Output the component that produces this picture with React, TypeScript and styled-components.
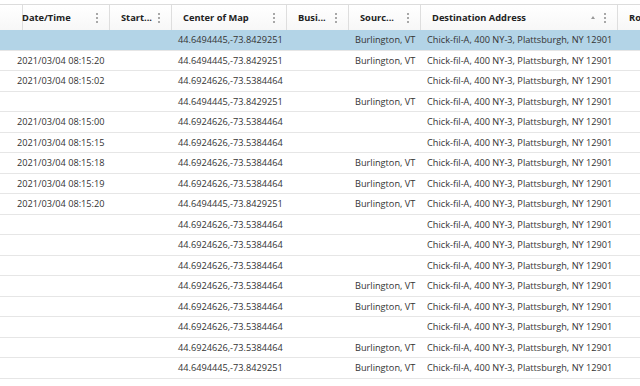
import React from "react";
import styled, { createGlobalStyle } from "styled-components";

const GlobalStyle = createGlobalStyle`
  html, body {
    margin: 0;
    padding: 0;
    background: #ffffff;
    overflow: hidden;
  }
  body {
    font-family: "Open Sans", "Noto Sans", sans-serif;
  }
`;

const COLS = "11px 99px 62px 115px 62px 72px 197px 140px";

const Grid = styled.div`
  padding-top: 4px;
  width: 640px;
  overflow: hidden;
`;

const HeaderRow = styled.div`
  display: grid;
  grid-template-columns: ${COLS};
  height: 26px;
  border-top: 1px solid #dcdcdc;
  box-sizing: border-box;
  background: linear-gradient(#ffffff, #f7f7f7);
`;

const HeaderCell = styled.div`
  display: flex;
  align-items: center;
  gap: 6px;
  padding: 0 11px 0 11px;
  border-right: 1px solid #dedede;
  font-size: 9.3px;
  font-weight: 700;
  color: #222;
  white-space: nowrap;
  overflow: hidden;
  min-width: 0;
`;

const HeaderLabel = styled.span`
  flex: 1;
  overflow: hidden;
`;

const SortArrow = styled.span`
  width: 0;
  height: 0;
  border-left: 2.5px solid transparent;
  border-right: 2.5px solid transparent;
  border-bottom: 3px solid #999;
  margin-right: 3px;
`;

const Dots = styled.span`
  display: flex;
  flex-direction: column;
  gap: 2px;
  flex: none;
  & > i {
    display: block;
    width: 2px;
    height: 2px;
    background: #a8a8a8;
  }
`;

const Row = styled.div<{ $selected?: boolean }>`
  display: grid;
  grid-template-columns: ${COLS};
  height: 20.5px;
  box-sizing: border-box;
  border-bottom: 1px solid #e6e6e6;
  background: ${(p) => (p.$selected ? "#b3d4e7" : "#ffffff")};
`;

const Cell = styled.div`
  display: flex;
  align-items: center;
  padding: 0 6px;
  font-size: 9.2px;
  color: #333;
  white-space: nowrap;
  overflow: hidden;
  min-width: 0;
`;

const DEST = "Chick-fil-A, 400 NY-3, Plattsburgh, NY 12901";
const A = "44.6494445,-73.8429251";
const B = "44.6924626,-73.5384464";
const BUR = "Burlington, VT";

const rows: [string, string, string][] = [
  ["", A, BUR],
  ["2021/03/04 08:15:20", A, BUR],
  ["2021/03/04 08:15:02", B, ""],
  ["", A, BUR],
  ["2021/03/04 08:15:00", B, ""],
  ["2021/03/04 08:15:15", B, ""],
  ["2021/03/04 08:15:18", B, BUR],
  ["2021/03/04 08:15:19", B, BUR],
  ["2021/03/04 08:15:20", A, BUR],
  ["", B, ""],
  ["", B, ""],
  ["", B, ""],
  ["", B, BUR],
  ["", B, BUR],
  ["", B, ""],
  ["", B, BUR],
  ["", A, BUR],
];

const MenuDots = () => (
  <Dots>
    <i />
    <i />
    <i />
  </Dots>
);

const headers = [
  { label: "Date/Time" },
  { label: "Start..." },
  { label: "Center of Map" },
  { label: "Busi..." },
  { label: "Sourc..." },
  { label: "Destination Address", sorted: true },
];

export default function App() {
  return (
    <>
      <GlobalStyle />
      <Grid>
        <HeaderRow>
          <HeaderCell />
          {headers.map((h) => (
            <HeaderCell key={h.label}>
              <HeaderLabel>{h.label}</HeaderLabel>
              {h.sorted && <SortArrow />}
              <MenuDots />
            </HeaderCell>
          ))}
          <HeaderCell>
            <HeaderLabel>Ro</HeaderLabel>
          </HeaderCell>
        </HeaderRow>
        {rows.map(([date, center, source], i) => (
          <Row key={i} $selected={i === 0}>
            <Cell />
            <Cell>{date}</Cell>
            <Cell />
            <Cell>{center}</Cell>
            <Cell />
            <Cell>{source}</Cell>
            <Cell>{DEST}</Cell>
            <Cell />
          </Row>
        ))}
      </Grid>
    </>
  );
}
